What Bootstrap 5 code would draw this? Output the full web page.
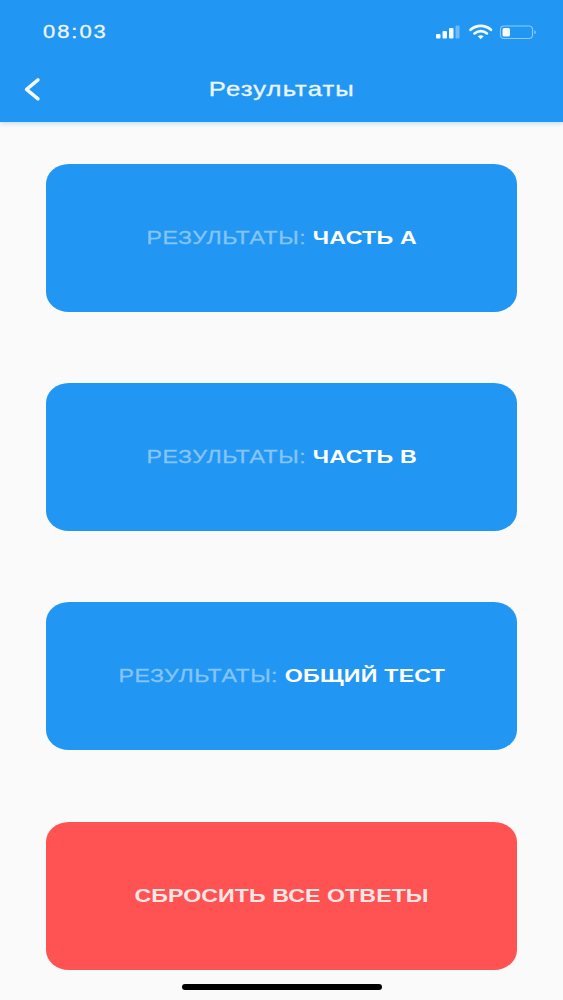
<!DOCTYPE html>
<html lang="ru">
<head>
<meta charset="utf-8">
<title>Результаты</title>
<link rel="stylesheet" href="https://cdn.jsdelivr.net/npm/bootstrap@5.3.0/dist/css/bootstrap.min.css">
<style>
html,body{height:1000px;overflow:hidden}
body{background:#fafafa;font-family:"Liberation Sans",Arial,sans-serif}
.app-shell{width:563px;height:1000px}
.top-bar{background:#2196f3;height:122px;box-shadow:0 1px 5px rgba(33,150,243,.35);color:#fff}
.status-row{height:61px;padding:3px 27px 0 43px}
.clock{display:inline-block;font-size:18px;letter-spacing:1.6px;color:#eef7ff;-webkit-text-stroke:.3px #eef7ff;transform:scaleX(1.22);transform-origin:left center}
.title-row{height:61px;padding-bottom:6px}
.back-btn{left:22px;top:50%;transform:translateY(-60%);line-height:0}
.page-title{display:inline-block;font-size:21px;letter-spacing:.9px;color:#eaf5fe;-webkit-text-stroke:.35px #eaf5fe;transform:scaleX(1.22)}
.actions{padding:42px 46px 0;gap:71px}
.action-btn{height:148px;border:0;border-radius:23px/20px;font-size:19px;font-weight:700;color:#fff;padding:0}
.action-btn:hover,.action-btn:active{color:#fff}
.stretch-label{display:inline-block;letter-spacing:.2px;transform:scaleX(1.22)}
.action-blue,.action-blue:hover,.action-blue:active{background:#2196f3}
.action-red,.action-red:hover,.action-red:active{background:#ff5252;color:#fde6e6;margin-top:1px}
.action-red .stretch-label{letter-spacing:.05px}
.muted-part{font-weight:400;color:#85c4f7;-webkit-text-stroke:.3px #85c4f7;letter-spacing:.38px}
.home-bar{left:182px;top:984px;width:200px;height:6px;background:#000;border-radius:3px}
</style>
</head>
<body>
<div class="app-shell position-relative">
  <header class="top-bar">
    <div class="status-row d-flex align-items-center justify-content-between">
      <span class="clock">08:03</span>
      <svg width="100" height="20" viewBox="0 0 100 20" aria-hidden="true">
        <g fill="#f4faff">
          <rect x="0" y="12" width="4.500" height="4.500" rx="1"/>
          <rect x="6.500" y="9" width="4.500" height="7.500" rx="1"/>
          <rect x="13" y="6" width="4.500" height="10.500" rx="1"/>
          <rect x="19.500" y="3.500" width="4" height="13" rx="1" fill="#6fbaf7"/>
        </g>
        <g fill="none" stroke="#f4faff" stroke-width="2.600" stroke-linecap="round">
          <path d="M34.500 7.800c6-5.200 14.500-5.200 20.500 0"/>
          <path d="M38.500 11.400c3.800-3 9-3 12.500 0"/>
        </g>
        <path d="M41.800 14.200c1.800-1.400 4.100-1.400 5.900 0l-3 3z" fill="#f4faff"/>
        <rect x="64.500" y="4" width="32" height="12.500" rx="3.500" fill="none" stroke="#8ccbf9" stroke-width="1.100"/>
        <rect x="66.500" y="6" width="7.500" height="8.500" rx="1.500" fill="#f4faff"/>
        <path d="M98.300 8.200v4c1-.4 1.500-1.100 1.500-2s-.5-1.600-1.500-2z" fill="#8ccbf9"/>
      </svg>
    </div>
    <div class="title-row position-relative d-flex align-items-center justify-content-center">
      <span class="back-btn position-absolute">
        <svg width="20" height="26" viewBox="0 0 20 26" aria-hidden="true"><path d="M16 3.500 4.500 13 16 22.500" fill="none" stroke="#f4faff" stroke-width="3.400" stroke-linecap="round" stroke-linejoin="round"/></svg>
      </span>
      <span class="page-title">Результаты</span>
    </div>
  </header>
  <main class="actions d-flex flex-column">
    <button type="button" class="btn action-btn action-blue w-100"><span class="stretch-label"><span class="muted-part">РЕЗУЛЬТАТЫ:</span> ЧАСТЬ А</span></button>
    <button type="button" class="btn action-btn action-blue w-100"><span class="stretch-label"><span class="muted-part">РЕЗУЛЬТАТЫ:</span> ЧАСТЬ В</span></button>
    <button type="button" class="btn action-btn action-blue w-100"><span class="stretch-label"><span class="muted-part">РЕЗУЛЬТАТЫ:</span> ОБЩИЙ ТЕСТ</span></button>
    <button type="button" class="btn action-btn action-red w-100"><span class="stretch-label">СБРОСИТЬ ВСЕ ОТВЕТЫ</span></button>
  </main>
  <div class="home-bar position-absolute"></div>
</div>
<script src="https://cdn.jsdelivr.net/npm/bootstrap@5.3.0/dist/js/bootstrap.bundle.min.js"></script>
</body>
</html>
